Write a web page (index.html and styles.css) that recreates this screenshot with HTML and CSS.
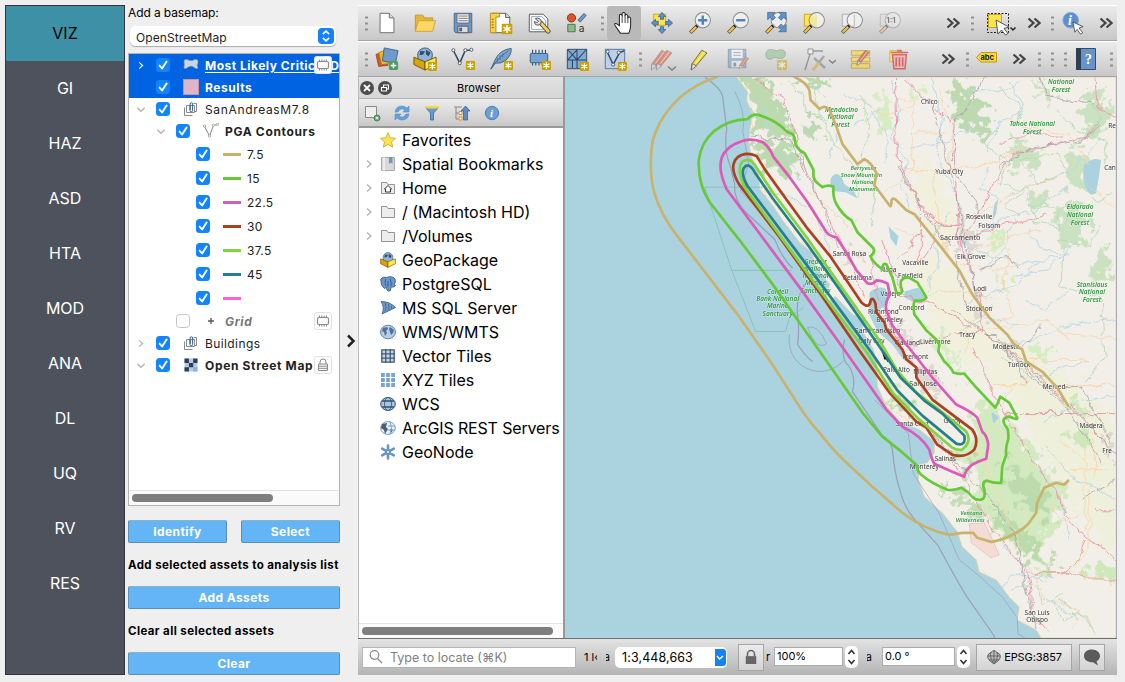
FILE: index.html
```
<!DOCTYPE html>
<html lang="en">
<head>
<meta charset="utf-8">
<title>Map viewer</title>
<link rel="stylesheet" href="styles.css">
</head>
<body>
<svg class="defs" width="0" height="0">
  <defs>
    <linearGradient id="blueg" x1="0" y1="0" x2="1" y2="1"><stop offset="0" stop-color="#a9c6e4"/><stop offset="1" stop-color="#4f80b4"/></linearGradient>
    <symbol id="star" viewBox="0 0 10 10"><rect width="10" height="10" rx="1.5" fill="#c9a100"/><path d="M5 1.500v7M1.800 3.200l6.400 3.600M8.200 3.200L1.800 6.800" stroke="#fff" stroke-width="1.300"/></symbol>
    <symbol id="more" viewBox="0 0 14 12"><path d="M1.500 1.500l5 4.500-5 4.500M7.500 1.500l5 4.500-5 4.500" fill="none" stroke="#444" stroke-width="2.200"/></symbol>
    <symbol id="lens" viewBox="0 0 26 26"><path d="M2.500 23.500l8-8" stroke="#555" stroke-width="4"/><path d="M3 23l6-6" stroke="#f5c33b" stroke-width="2.400"/><path d="M9 17l2-2" stroke="#111" stroke-width="3"/><circle cx="16" cy="10" r="8.300" fill="#f4f4f4" fill-opacity=".75" stroke="#888" stroke-width="1.100"/></symbol>
    <symbol id="check" viewBox="0 0 14 14"><rect width="14" height="14" rx="3.500" fill="#1285fb"/><path d="M3.600 7.600l2.500 2.900 4.500-7" fill="none" stroke="#fff" stroke-width="1.900" stroke-linecap="round" stroke-linejoin="round"/></symbol>
    <symbol id="right" viewBox="0 0 8 10"><path d="M2 1.500L5.800 5 2 8.500" fill="none" stroke="currentColor" stroke-width="1.400"/></symbol>
    <symbol id="down" viewBox="0 0 10 8"><path d="M1.300 2.200L5 5.800l3.700-3.600" fill="none" stroke="currentColor" stroke-width="1.400"/></symbol>
    <symbol id="chip" viewBox="0 0 18 18"><rect x=".5" y=".5" width="17" height="17" rx="2" fill="#fcfcfc" stroke="#e2e2e2"/><rect x="3.500" y="5.500" width="11" height="7" rx="1.500" fill="none" stroke="#8a8a8a" stroke-width="1.200"/><path d="M5.500 3.500v2m2.300-2v2m2.400-2v2m2.300-2v2M5.500 12.500v2m2.300-2v2m2.400-2v2m2.300-2v2" stroke="#8a8a8a"/></symbol>
    <symbol id="group" viewBox="0 0 16 16"><path d="M1.500 6.500v8h8M3.500 4.500h8v7h-8z" fill="none" stroke="#8a8a8a"/><path d="M7 5v4.500a1.300 1.300 0 002.600 0V3a1.200 1.200 0 00-2.400 0v6" fill="none" stroke="#355f83"/><path d="M10.500 2.500h3v8h-2" fill="none" stroke="#8a8a8a"/></symbol>
    <symbol id="folder" viewBox="0 0 16 16"><path d="M1.500 2.500h5l1.500 2h6.500v9h-13z" fill="#ececec" stroke="#959595"/></symbol>
    <symbol id="box" viewBox="0 0 26 26"><circle cx="13" cy="9" r="8" fill="#8fb3da" stroke="#365979"/><path d="M8 4l5 1-2 3-4 1zM14 3l5 3-2 4-3-2z" fill="#31506e"/><path d="M1 11l12 5v9L1 19z" fill="#d8a40a" stroke="#6b5204"/><path d="M25 11l-12 5v9l12-6z" fill="#fce94f" stroke="#6b5204"/></symbol>
    <symbol id="globe" viewBox="0 0 16 16"><ellipse cx="8" cy="8" rx="7.500" ry="6.800" fill="#b4cde8" stroke="#6285aa"/><path d="M3 4l4-1 1 2-2 2 1 2-2 3-1-4-2-1zM10 3l4 3-1 3-2 2-1-3-1-3z" fill="#4d7299"/></symbol>
    <symbol id="pencil" viewBox="0 0 26 26"><path d="M5 22L3.500 24l1-6L15 3.500l5.500 3L9 20z" fill="currentColor" stroke="#5a4a20" stroke-width=".8"/><path d="M8 18L18 5" stroke="#fff" stroke-opacity=".5" stroke-width="1.500"/><path d="M4.500 18l4.800 2.500L3.500 25z" fill="#ddd" stroke="#444" stroke-width=".7"/></symbol>
  </defs>
</svg>

<main class="app">
  <nav class="modes">
    <a class="mode mode-on">VIZ</a><a class="mode">GI</a><a class="mode">HAZ</a><a class="mode">ASD</a><a class="mode">HTA</a><a class="mode">MOD</a><a class="mode">ANA</a><a class="mode">DL</a><a class="mode">UQ</a><a class="mode">RV</a><a class="mode">RES</a>
  </nav>

  <section class="side">
    <label class="basemap-label">Add a basemap:</label>
    <div class="combo"><span>OpenStreetMap</span><svg width="16" height="16" viewBox="0 0 16 16"><rect width="16" height="16" rx="4" fill="#1482fa"/><path d="M4.800 6.200L8 3.200l3.200 3M4.800 9.800L8 12.800l3.200-3" fill="none" stroke="#fff" stroke-width="1.600"/></svg></div>
    <div class="layers">
      <div class="row sel lvl1"><svg class="tw"><use href="#right"/></svg><svg class="ck"><use href="#check"/></svg><svg class="ic" viewBox="0 0 16 16"><path d="M1 4q0-2 3-1.500Q8 5 12 2.500q3-.5 3 1.500 0 3-1 4l1 3q-1 1-3 0-3-3-6-1.500Q3 12.500 1 11q-.5-1 .500-3z" fill="#c9d6e4" stroke="#8b9bb0" stroke-width=".6"/></svg><b class="under">Most Likely Critical D</b><svg class="tag"><use href="#chip"/></svg></div>
      <div class="row sel lvl1"><i class="tw"></i><svg class="ck"><use href="#check"/></svg><i class="ic swatch"></i><b class="tight">Results</b></div>
      <div class="row lvl1"><svg class="tw"><use href="#down"/></svg><svg class="ck"><use href="#check"/></svg><svg class="ic"><use href="#group"/></svg><span class="loose">SanAndreasM7.8</span></div>
      <div class="row lvl2"><svg class="tw"><use href="#down"/></svg><svg class="ck"><use href="#check"/></svg><svg class="ic" viewBox="0 0 16 16"><path d="M1.500 3.500L6.500 13l4-10.500 4-1" fill="none" stroke="#888"/><g fill="#fff" stroke="#999" stroke-width=".8"><circle cx="1.500" cy="3" r="1.200"/><circle cx="10.300" cy="2.300" r="1.200"/><circle cx="14.500" cy="1.500" r="1.200"/><circle cx="6.500" cy="13" r="1.200"/></g></svg><b class="loose">PGA Contours</b></div>
      <div class="row leaf"><svg class="ck"><use href="#check"/></svg><i class="line gold"></i><span>7.5</span></div>
      <div class="row leaf"><svg class="ck"><use href="#check"/></svg><i class="line green"></i><span>15</span></div>
      <div class="row leaf"><svg class="ck"><use href="#check"/></svg><i class="line pink"></i><span>22.5</span></div>
      <div class="row leaf"><svg class="ck"><use href="#check"/></svg><i class="line rust"></i><span>30</span></div>
      <div class="row leaf"><svg class="ck"><use href="#check"/></svg><i class="line lime"></i><span>37.5</span></div>
      <div class="row leaf"><svg class="ck"><use href="#check"/></svg><i class="line teal"></i><span>45</span></div>
      <div class="row leaf"><svg class="ck"><use href="#check"/></svg><i class="line magenta"></i></div>
      <div class="row lvl2 grid-row"><i class="tw"></i><i class="ck empty"></i><svg class="ic" viewBox="0 0 16 16"><path d="M8 5v6M5 8h6" stroke="#555" stroke-width="1.300"/></svg><b class="loose">Grid</b><svg class="tag"><use href="#chip"/></svg></div>
      <div class="row lvl1"><svg class="tw"><use href="#right"/></svg><svg class="ck"><use href="#check"/></svg><svg class="ic"><use href="#group"/></svg><span class="mid-loose">Buildings</span></div>
      <div class="row lvl1"><svg class="tw"><use href="#down"/></svg><svg class="ck"><use href="#check"/></svg><svg class="ic" viewBox="0 0 16 16"><path d="M1.500 1.500h13v13h-13z" fill="#b4cae4"/><path d="M1.500 1.500h4.400v4.400H1.500zM10.200 1.500h4.300v4.400h-4.300zM5.900 5.900h4.300v4.300H5.900zM1.500 10.200h4.400v4.300H1.500z" fill="#2c3e55"/><path d="M10.200 10.200h4.300v4.300h-4.300z" fill="#8fb0d6"/></svg><b class="loose">Open Street Map</b><svg class="tag" viewBox="0 0 18 18"><rect x=".5" y=".5" width="17" height="17" rx="2" fill="#fcfcfc" stroke="#e2e2e2"/><path d="M4.500 8h9v6.500h-9zM6 8V6a3 3 0 016 0v2M5 10.200h8M5 12.300h8" fill="none" stroke="#8a8a8a"/></svg></div>
      <div class="hbar"><i class="thumb"></i></div>
    </div>
    <div class="pair"><button class="btn">Identify</button><button class="btn">Select</button></div>
    <p class="hint">Add selected assets to analysis list</p>
    <button class="btn">Add Assets</button>
    <p class="hint">Clear all selected assets</p>
    <button class="btn">Clear</button>
  </section>

  <div class="handle"><svg width="10" height="14" viewBox="0 0 10 14"><path d="M2 1.500L7.500 7 2 12.500" fill="none" stroke="#222" stroke-width="2.500"/></svg></div>

  <section class="gis">
    <div class="bar">
      <i class="dots first"></i>
      <span class="cell"><svg viewBox="0 0 26 26"><path d="M5.500 2.500h10l5 5v16h-15z" fill="#fff" stroke="#666"/><path d="M15.500 2.500v5h5" fill="#ddd" stroke="#666"/></svg></span>
      <span class="cell"><svg viewBox="0 0 26 26"><path d="M2.500 22V4.500h8l2 3h9V12" fill="#e7b632" stroke="#b99a3a"/><path d="M2.500 22L6 10.500h18.500L21 22z" fill="#fdd762" stroke="#c9a23e"/></svg></span>
      <span class="cell"><svg viewBox="0 0 26 26"><path d="M3.500 2.500h19v21H5l-1.500-2z" fill="#6d97c4" stroke="#41658c"/><path d="M6.500 3h13v10h-13z" fill="#f2f2f2" stroke="#667"/><path d="M8 5.500h10M8 8h10M8 10.500h10" stroke="#777"/><path d="M7.500 16.500h11v7h-11z" fill="#ddd" stroke="#556"/><path d="M9 18h3v4H9z" fill="#41658c"/></svg></span>
      <span class="cell"><svg viewBox="0 0 26 26"><path d="M3.500 2.500h15l4 4v17h-19z" fill="#fff" stroke="#555"/><path d="M18 2.500v4.500h4.500" fill="#ddd" stroke="#555"/><path d="M1.500 2.500h10v4h-4v17h-6z" fill="#f7d24b" stroke="#b38c14"/><path d="M3 9h2M3 12h2M3 15h2M3 18h2" stroke="#775b0b"/><use href="#star" x="13.500" y="13.500" width="12" height="12"/></svg></span>
      <span class="cell"><svg viewBox="0 0 26 26"><path d="M2.500 3.500h15l5 5v14h-20z" fill="#fafafa" stroke="#555"/><path d="M5 6h11l4 4v10H5z" fill="none" stroke="#8ca9cf"/><path d="M15 13l8 9" stroke="#444" stroke-width="5" stroke-linecap="round"/><path d="M16 14l7 8" stroke="#f5cf56" stroke-width="3.200" stroke-linecap="round"/><path d="M9 8.500a4 4 0 016 5l-3 2a4 4 0 01-4-4l3 1 1.500-1.500z" fill="#ddd" stroke="#555"/></svg></span>
      <span class="cell"><svg viewBox="0 0 26 26"><circle cx="7" cy="7.500" r="4.500" fill="#d9542b" stroke="#8d3214"/><path d="M15 11l7-7.500" stroke="#3d5f85" stroke-width="4"/><path d="M15.500 10.500l6-6.500" stroke="#739fcb" stroke-width="2.400"/><path d="M3 14.500h8v8H3z" fill="#8fb68e" stroke="#497748"/><text x="15" y="22.500" class="glyph">a</text></svg></span>
      <i class="dots mid"></i>
      <span class="cell on"><svg viewBox="0 0 26 26"><path d="M9 24l-5.500-8q-1.500-3 1-2.500L8 16V4.500q1.500-2 3 0V2.500q1.700-2 3.200 0v2q1.500-1.500 3 .5v2q1.800-1.200 3 .8V15q0 5-2 9z" fill="#fff" stroke="#222" stroke-width="1.100"/><path d="M11 4.500V13M14.200 4.500V13M17.200 6V13" stroke="#222" stroke-width=".9"/></svg></span>
      <span class="cell"><svg viewBox="0 0 26 26"><path d="M4 3.500h13v12H4z" fill="#fce54e" stroke="#c9a615"/><path d="M13 1.500l4 4.500h-2.300v3h-3.400V6H9zM13 24.500l4-4.500h-2.300v-3h-3.400v3H9zM1.500 13l4.500-4v2.300h3v3.400H6V17zM24.500 13L20 9v2.300h-3v3.400h3V17z" fill="#5e8fc6" stroke="#345d89" stroke-width=".8"/></svg></span>
      <span class="cell"><svg viewBox="0 0 26 26"><use href="#lens"/><path d="M16 5v10M11 10h10" stroke="#4f83bb" stroke-width="2.600"/></svg></span>
      <span class="cell"><svg viewBox="0 0 26 26"><use href="#lens"/><path d="M11 10h10" stroke="#4f83bb" stroke-width="2.600"/></svg></span>
      <span class="cell"><svg viewBox="0 0 26 26"><use href="#lens"/><path d="M4 1.500h8l-2.500 2.500 3 3-3 3-3-3L4 9.500zM24 1.500h-8l2.500 2.500-3 3 3 3 3-3L24 9.500zM24 22.500h-8l2.500-2.500-3-3 3-3 3 3 2.500-2.500z" fill="#6191c5" stroke="#345d89" stroke-width=".7"/></svg></span>
      <span class="cell"><svg viewBox="0 0 26 26"><path d="M2.500 3.500h13v13h-13z" fill="#fce54e" stroke="#c9a615"/><use href="#lens"/><path d="M9 6h7v11q-8-1-7-11z" fill="#f2e486" fill-opacity=".7"/></svg></span>
      <span class="cell"><svg viewBox="0 0 26 26"><path d="M2.500 3.500h13v13h-13z" fill="#ececec" stroke="#aaa"/><use href="#lens"/><path d="M15.500 4v12.500H11" fill="none" stroke="#bbb"/></svg></span>
      <span class="cell dim"><svg viewBox="0 0 26 26"><path d="M2.500 3.500h13v13h-13z" fill="#ddd" stroke="#999"/><use href="#lens"/><text x="9" y="13.500" class="ratio">1:1</text></svg></span>
      <svg class="more m30"><use href="#more"/></svg><i class="dots w14"></i>
      <span class="cell"><svg class="wide" viewBox="0 0 38 26"><path d="M8.500 3.500h21v19h-21z" fill="none" stroke="#222" stroke-dasharray="2 1.500"/><path d="M9.500 4.500h13v13h-13z" fill="#fce54e" stroke="#c9a615"/><path d="M17 10l13 7-5 1.500 4 5-2.500 1.500-4-5-3.500 4z" fill="#fff" stroke="#444" stroke-width=".9"/><path d="M31.500 17.500L34 20l2.500-2.500" fill="none" stroke="#222" stroke-width="1.500"/></svg></span>
      <svg class="more m4"><use href="#more"/></svg><i class="dots w10"></i>
      <span class="cell info"><svg viewBox="0 0 26 26"><circle cx="10.500" cy="10" r="8.500" fill="#5c8fcd" stroke="#8aabd2"/><text x="7.500" y="15.500" class="info-i">i</text><path d="M13 12l11 5-4.500 1.500 4 5-2.500 1.500-3.500-5-2.500 3z" fill="#fff" stroke="#444" stroke-width=".9"/></svg></span>
      <svg class="more last"><use href="#more"/></svg>
    </div>
    <div class="bar">
      <i class="dots first"></i>
      <span class="cell"><svg viewBox="0 0 26 26"><path d="M1 8l9-3 4 15-10 1z" fill="#d25a27" stroke="#8a3512" stroke-width=".7"/><path d="M4 6l9-3 4 15-10 1z" fill="#f1b92d" stroke="#98700d" stroke-width=".7"/><path d="M10 1l15 3-3 14-14-3z" fill="#6f9bcb" stroke="#3d648f"/><rect x="15" y="15" width="10" height="10" rx="2" fill="#4e9b63"/><path d="M20 17v6M17 20h6" stroke="#fff" stroke-width="1.600"/></svg></span>
      <span class="cell"><svg viewBox="0 0 26 26"><use href="#box"/><use href="#star" x="16" y="16" width="10" height="10"/></svg></span>
      <span class="cell"><svg viewBox="0 0 26 26"><path d="M2.500 3.500l7 14 6-14h6" fill="none" stroke="#334c66" stroke-width="1.700"/><g fill="#fff" stroke="#456"><circle cx="2.500" cy="3.500" r="1.700"/><circle cx="15.500" cy="3.500" r="1.700"/><circle cx="22" cy="3" r="1.700"/><circle cx="9.500" cy="17.500" r="1.700"/></g><use href="#star" x="16" y="15" width="10" height="10"/></svg></span>
      <span class="cell"><svg viewBox="0 0 26 26"><path d="M2 24L7 13Q12 3 24 1.500q1 7-6 13-5 4-11 3z" fill="url(#blueg)" stroke="#416486"/><path d="M2 24q6-11 19-20M9 12v4m3-7v5m3-7v4" fill="none" stroke="#456a91"/><use href="#star" x="16" y="15" width="10" height="10"/></svg></span>
      <span class="cell"><svg viewBox="0 0 26 26"><path d="M6 3v17M9.500 3v17M13 3v17M16.500 3v17M20 3v17" stroke="#345472" stroke-width="1.200"/><rect x="3.500" y="7" width="19" height="10" rx="1" fill="#78a2d1" stroke="#335c87"/><use href="#star" x="16" y="15" width="10" height="10"/></svg></span>
      <span class="cell"><svg viewBox="0 0 26 26"><path d="M2.500 2.500h21v21h-21z" fill="#80a9d4" stroke="#284562"/><path d="M3 14h20M13 3v20M3 3l10 11M13 3L3 14M23 3L13 14M8 14v9" stroke="#284562" stroke-width="1.100"/><use href="#star" x="16" y="16" width="10" height="10"/></svg></span>
      <span class="cell"><svg viewBox="0 0 26 26"><path d="M2.500 2.500h21v21h-21z" fill="#bcd0e8" stroke="#4d7499"/><path d="M4 4l7 15L18 6l5-2" fill="none" stroke="#2f4e6d" stroke-width="1.600"/><g fill="#fff" stroke="#456"><circle cx="5" cy="5" r="1.700"/><circle cx="17" cy="6" r="1.700"/><circle cx="11" cy="19" r="1.700"/></g><use href="#star" x="16" y="16" width="10" height="10"/></svg></span>
      <i class="dots mid"></i>
      <span class="cell dim"><svg class="wide" viewBox="0 0 38 26"><g color="#e0472a"><use href="#pencil" x="5" y="1" width="24" height="24"/><use href="#pencil" x="11" y="1" width="24" height="24" transform="translate(-1)"/></g><path d="M25 20.500l4 3.500 4-3.500" fill="none" stroke="#333" stroke-width="1.500"/></svg></span>
      <span class="cell yellow"><svg viewBox="0 0 26 26"><use href="#pencil"/></svg></span>
      <span class="cell dim red"><svg viewBox="0 0 26 26"><path d="M2.500 2.500h19v20h-19z" fill="#6d97c4" stroke="#41658c"/><path d="M6 3h12v9H6z" fill="#fff"/><path d="M8 6h8M8 9h8" stroke="#777"/><path d="M6 15h12v7H6z" fill="#eee"/><path d="M8 17h3v4H8z" fill="#41658c"/><use href="#pencil" x="12" y="8" width="16" height="17"/></svg></span>
      <span class="cell dim"><svg viewBox="0 0 26 26"><path d="M2 8q0-6 7-5 5 2 9 0 6 0 5 6-2 5-8 3-4-2-7 1-6 1-6-5z" fill="#83bd87" stroke="#5c8b60"/><use href="#star" x="14" y="14" width="11" height="11"/></svg></span>
      <span class="cell vertex dim"><svg class="vx" viewBox="0 0 34 26"><path d="M3 24L9 5h12" fill="none" stroke="#555" stroke-width="1.400"/><path d="M6 3h5v5H6z" fill="#fff" stroke="#444"/><path d="M12 12l11 10M22 10L11 24" stroke="#777" stroke-width="2.500"/><path d="M11 24l6-7" stroke="#d6aa2c" stroke-width="3"/><path d="M27 14l3.500 3 3.500-3" fill="none" stroke="#333" stroke-width="1.500"/></svg></span>
      <span class="cell dim2 red"><svg viewBox="0 0 26 26"><path d="M2.500 4h20v5h-20zM2.500 11h20v5h-20zM2.500 18h20v5h-20z" fill="#f7d94a" stroke="#b89322"/><use href="#pencil" x="6" y="0" width="20" height="22"/></svg></span>
      <span class="cell dim2"><svg viewBox="0 0 26 26"><path d="M3 4h13v12H3z" fill="#fce54e" stroke="#c9a615"/><path d="M6 8.500h15l-1.500 15h-12z" fill="#f2b4b4" stroke="#d43a3a" stroke-width="1.600"/><path d="M4 6h19M11 4h5M10 11v10M13.500 11v10M17 11v10" stroke="#d43a3a" stroke-width="1.800"/></svg></span>
      <svg class="more m16"><use href="#more"/></svg><i class="dots w14"></i>
      <svg class="abc" viewBox="0 0 26 16"><path d="M2.500 7.500L7 2.500h15.500v9.500H7z" fill="#fbd63d" stroke="#c39b08"/><text x="6.500" y="10" class="abc-t">abc</text></svg>
      <svg class="more m6"><use href="#more"/></svg><i class="dots w14"></i><i class="dots w12"></i><i class="dots w14"></i>
      <svg class="book" viewBox="0 0 28 26"><path d="M4.500 2.500h19v21h-19z" fill="#6794c8" stroke="#2f4d6c"/><path d="M4 2h5v22H4z" fill="#2d3f52"/><text x="13" y="18" class="q">?</text></svg>
      <i class="dots end"></i>
    </div>

    <div class="work">
      <aside class="browser">
        <header class="dock-title"><svg width="34" height="16" viewBox="0 0 34 16"><circle cx="8" cy="8" r="7" fill="#4c4c4c"/><path d="M5 5l6 6M11 5l-6 6" stroke="#fff" stroke-width="1.800"/><circle cx="26" cy="8" r="7" fill="#4c4c4c"/><path d="M22.500 7.500h5v3.500h-5zM24.500 7V5h5v4h-2" fill="none" stroke="#fff" stroke-width="1.100"/></svg><span>Browser</span></header>
        <div class="dock-tools">
          <svg viewBox="0 0 18 18"><path d="M2.500 2.500h11v11h-11z" fill="#eee" stroke="#888"/><circle cx="14" cy="14" r="3" fill="#7fae84" stroke="#4c8052"/><circle cx="14" cy="14" r="1" fill="#fff"/></svg>
          <svg viewBox="0 0 18 18"><path d="M2 8q1-6 7-6 3 0 5 2l2-2v6h-6l2-2q-5-3-7 2zM16 10q-1 6-7 6-3 0-5-2l-2 2v-6h6l-2 2q5 3 7-2z" fill="#66a0dc" stroke="#4b86c0" stroke-width=".5"/></svg>
          <svg viewBox="0 0 18 18"><path d="M2 3h14l-5.500 6v7h-3V9z" fill="#6b9ace" stroke="#4375a9"/><path d="M2 2h14v2.500H2z" fill="#f0d84c"/></svg>
          <svg viewBox="0 0 18 18"><path d="M1 3h8M3 3v12h3M3 9h3" fill="none" stroke="#888"/><path d="M6 7.500h3v3H6zM6 13h3v3H6z" fill="#fff" stroke="#ec8b25"/><path d="M12.500 2l4.500 5h-2.500v9h-4V7H8z" fill="#5c8cc0" stroke="#365d87" stroke-width=".7"/></svg>
          <svg viewBox="0 0 18 18"><circle cx="9" cy="9" r="6.700" fill="#6c9dd5" stroke="#4f7fb4"/><text x="7" y="13" class="mini-i">i</text></svg>
        </div>
        <div class="tree">
          <div class="item"><i class="ar"></i><svg viewBox="0 0 16 16"><path d="M8 .8l2.200 5 5.300.5-4 3.600 1.200 5.300L8 12.400l-4.700 2.800 1.200-5.300-4-3.600 5.300-.5z" fill="#fbe34f" stroke="#c9a52a" stroke-width=".8"/></svg>Favorites</div>
          <div class="item"><svg class="ar"><use href="#right"/></svg><svg viewBox="0 0 16 16"><path d="M1.500 1.500h13v13h-13z" fill="#d8d8d8" stroke="#aaa"/><path d="M4 1v14" stroke="#fff"/><path d="M9 1h3.500v7l-1.700-1.500L9 8z" fill="#6d95c0"/></svg><span class="wider">Spatial Bookmarks</span></div>
          <div class="item"><svg class="ar"><use href="#right"/></svg><svg viewBox="0 0 16 16"><use href="#folder"/><path d="M4.500 9L8 5.500 11.500 9H10.500V12h-5V9z" fill="#fff" stroke="#333"/></svg>Home</div>
          <div class="item"><svg class="ar"><use href="#right"/></svg><svg viewBox="0 0 16 16"><use href="#folder"/></svg>/ (Macintosh HD)</div>
          <div class="item"><svg class="ar"><use href="#right"/></svg><svg viewBox="0 0 16 16"><use href="#folder"/></svg>/Volumes</div>
          <div class="item"><i class="ar"></i><svg viewBox="0 0 26 26"><use href="#box"/></svg>GeoPackage</div>
          <div class="item"><i class="ar"></i><svg viewBox="0 0 16 16"><path d="M.8 3q3-3 5.500-1.500Q10-.2 13.500 1.500q3.500 2.500.5 7.500l1.500.5-2 1.500H11l-.5 3.500q-2 1.500-3.500-.5L6.500 11 5 12.500Q1 11 .8 3z" fill="#6a97c7" stroke="#3f678f"/><path d="M5.500 3q-1 4 .5 7M10 3q2 4 1 7M8 5v6" fill="none" stroke="#3a5e84"/></svg>PostgreSQL</div>
          <div class="item"><i class="ar"></i><svg viewBox="0 0 16 16"><path d="M1 1.500q9 0 14.500 6L2 14q3-7-1-12.500z" fill="#6e9ac8" stroke="#48719a"/><path d="M5 2.500q2 5 0 9M8.500 4q1 3 0 6M11.500 5.500v3" fill="none" stroke="#486f99"/></svg>MS SQL Server</div>
          <div class="item"><i class="ar"></i><svg viewBox="0 0 16 16"><use href="#globe"/></svg>WMS/WMTS</div>
          <div class="item"><i class="ar"></i><svg viewBox="0 0 16 16"><path d="M1.800 1.800h12.400v12.400H1.800z" fill="#c3d6ec" stroke="#46596f" stroke-width="1.300"/><path d="M5.800 1v14M10.200 1v14M1 5.800h14M1 10.200h14" stroke="#46596f" stroke-width="1.300"/></svg>Vector Tiles</div>
          <div class="item"><i class="ar"></i><svg viewBox="0 0 16 16"><path d="M1 3h14M1 8h14M1 13h14" stroke="#77a3d2" stroke-width="3.800" stroke-dasharray="3.800 1.300"/></svg>XYZ Tiles</div>
          <div class="item"><i class="ar"></i><svg viewBox="0 0 16 16"><ellipse cx="8" cy="8" rx="7.300" ry="6.500" fill="#a9c6e5" stroke="#35506e"/><ellipse cx="8" cy="8" rx="3.500" ry="6.500" fill="none" stroke="#4a6787"/><path d="M2 5h12M2 11h12" stroke="#35506e" stroke-width="1.500"/></svg>WCS</div>
          <div class="item"><i class="ar"></i><svg viewBox="0 0 16 16"><ellipse cx="8" cy="8" rx="7.300" ry="6.500" fill="#e9f1fa" stroke="#7ca1c9"/><path d="M2 4l5-1-1 4 2 2-3 5-1-4-3-2zM10 9l3 1-2 3z" fill="#4a5f77"/><path d="M10 2q3 5 0 12M8 6h7M8 10h7" fill="none" stroke="#6ea0d6"/></svg><span class="narrow">ArcGIS REST Servers</span></div>
          <div class="item"><i class="ar"></i><svg viewBox="0 0 16 16"><path d="M8 1.500v13M2.200 4.700l11.600 6.600M13.800 4.700L2.200 11.300" stroke="#6894c2" stroke-width="2.600" stroke-linecap="round"/><circle cx="8" cy="8" r="3" fill="#6894c2"/><circle cx="8" cy="8" r="1" fill="#fff"/></svg>GeoNode</div>
        </div>
        <div class="hbar"><i class="thumb"></i></div>
      </aside>

      <svg class="map" viewBox="565 78 552 560" preserveAspectRatio="none">
        <defs>
          <filter id="rough" x="-5%" y="-5%" width="110%" height="110%" color-interpolation-filters="sRGB"><feTurbulence type="fractalNoise" baseFrequency=".1" numOctaves="4" seed="4"/><feDisplacementMap in="SourceGraphic" scale="38" xChannelSelector="R" yChannelSelector="G"/></filter>
          <filter id="wiggle" x="-5%" y="-5%" width="110%" height="110%" color-interpolation-filters="sRGB"><feTurbulence type="fractalNoise" baseFrequency=".07" numOctaves="3" seed="9"/><feDisplacementMap in="SourceGraphic" scale="10" xChannelSelector="R" yChannelSelector="G"/></filter>
          <path id="land" d="M737 78L748 93 747 101 753 116 750 131 749 145 752 158 759 175 760 190 773 206 783 221 800 243 812 253 817 268 830 285 826 304 836 297 853 315 867 321 862 330 874 350 877 363 878 387 887 407 900 422 920 430 935 442 935 453 928 463 920 465 919 480 925 497 943 513 958 532 963 547 977 560 980 572 997 580 1010 597 1020 607 1018 620 1037 630 1042 638H1117V78z"/>
          <clipPath id="shore"><use href="#land"/></clipPath>
        </defs>
        <rect x="565" y="78" width="552" height="560" fill="#aad3df"/>
        <use href="#land" fill="#f2efe9" stroke="#e5cfa8" stroke-width=".8"/>
        <g clip-path="url(#shore)">
          <path d="M905 255L950 262 972 300 990 330 1060 370 1117 420V560L1060 480 1020 410 985 370 950 350 925 300zM920 150l35 50 10 50-25-10-25-50z" fill="#eff1d6" opacity=".7" filter="url(#rough)"/>
          <g filter="url(#rough)">
            <path d="M738 72L766 78 772 100 788 118 792 138 782 138 752 130 750 100zM752 146L785 142 798 160 792 178 775 172 760 158zM808 118l14 6-2 14-12-2zM795 78l32 0 3 8-16 5zM957 85l12-2 8 18 18 18-8 20-20-8-14-20z" fill="#bcd9b0"/>
            <path d="M1036 84l16 8 6 16-14-4zM1086 92l20 0 6 28-12 22-14-10-6-18zM1014 140l20 8 8 16-12 8-18-8zM1066 154l18-4 10 12-8 22-14 6-8-16zM1058 208l22-4 8 14-6 26-20 4-4-22zM1098 255l10-8 4 30-12 12-8-14zM1028 190l24 10-4 8-22-4z" fill="#c4dfb8" opacity=".85"/>
            <path d="M908 78l8 6 6 12-8 4zM878 95l10 8 5 26-10 10-8-18zM990 234l12 2 4 10-12 4-6-8zM1003 275l6 6-2 12-6-6zM924 324l22 20 26 34-14-8-26-28zM1025 345l30 0 4 8-22 4z" fill="#d5edc0"/>
            <path d="M884 382l14 12 20 20 8 12-22-12-16-20zM976 400l30 12 28 38 34 48-8 18-14 26-2 32-40-38-26-30 0-25-18-20-24-2 30-6 6-22z" fill="#d3eac0"/>
            <path d="M1008 458l18 12 18 22 12 20-8 8-24-18-14-16zM994 506l18 14 26 22 18 34-24-14-32-36zM892 394l12 8 12 18-16-8zM968 458l12 2-4 12-12-4zM934 484l28 8 26 20-6 10-22-18z" fill="#b4d6a6" opacity=".75"/>
            <path d="M1072 432l18-4 2 16-20 0zM1088 564l30 2v14l-26-2zM1062 402l22 2 8 12-18-2z" fill="#cfe8ba"/>
          </g>
          <g fill="#d8cfca" opacity=".7" filter="url(#rough)"><path d="M952 234h22v18h-20zM912 366l24 6 6 22-16-4zM976 306h12v12h-12zM890 310l12 16 12 20-10 4-14-26zM1002 342h10v10h-10zM1104 440h13v18h-13zM846 250h10v12h-10z"/></g>
          <path d="M970 524l15-1 6 12 9 20-8 3-20-15z" fill="#f3dbd6" stroke="#e7b7ae" stroke-width=".6"/>
          <g fill="#aad3df">
            <path d="M831 180q5-9 11-2l3 7 9 6 4 8-12-6-11-1q-5-5-4-12zM1085 166q8-9 17-5l-2 16-3 17q-8 4-11-7-3-10-1-21zM870 293q8-7 16-4l4 8-6 10-6 6-8-8zM905 292l14-4 7 10-13 4-8-4zM870 306l8 4 8 18 14 16 12 20-8-4-12-16-14-12-8-16zM889 227l10 10-2 10-6-8zM995 205l4-5-2 14-4 8zM992 412l8 6-6 6z"/>
          </g>
          <g fill="none" filter="url(#wiggle)">
            <g stroke="#b3d8e3" stroke-width=".9">
              <path d="M890 80l10 30-6 28 12 24-4 30 18 30M930 78l12 40-4 40 22 46 8 50M952 212l-16 24 4 30-14 26M962 244l40-24 26-6 40-26M970 250l50 14 46-8M985 120l-30 20-20 6M1040 260l-26 28-50 16M1117 320l-54 8-52 20M1090 360l-56 18-32-20M1117 395l-40 8-32 20M1117 500l-46-24-26-32M1000 540l20 24 24 18M760 95l12 40M770 190l44 20 20 50M810 82l20 22M1010 82l16 30-24 10-14 30M1100 140l-30 34-60 20"/>
              <path d="M880 110l-24 16M1015 220l-12 30-22 22M1070 290l-24 20-20-8M1040 470l22 30 8 40M1080 620l-36-24M845 95l25 12 20 34-5 20M960 330l30-12 32 8M1000 200l-20-10 10-20M1030 230l10 20 30 6M840 130l-10 30M780 150l20 30M1080 240l-30 30-34 6M1000 590l14-16 40 4M975 90l26 4 20-10M940 145l-30 5"/>
            </g>
            <g stroke="#fad5aa" stroke-width=".9">
              <path d="M748 84l-3 24 8 20M752 165l12 28 25 25 20 34 28 36M860 100l26 16 30-10M898 100h16l-2 72-26 24M914 134h30M898 170l40 2 60-8 30-18M895 230l30 8M960 220l20-6 44-26 34-8M935 170l4 60 10 30M1010 250l-6 36 10 30-20 10M990 300l-30-10-40 8M1117 340l-60-8M1060 386h57M990 330l60-8 20 18M1090 490v60l-20 22M1086 440v90M1060 440l26 20M880 400l36 26M924 498l32 40 40 50M965 420l50 110 30 70M993 385h34l8-24M810 190l40 40 10-10M770 180l-4 15 54 60M1050 505l15 18 16-8M1030 360l60 0M1050 600l30 10-6 20"/>
              <path d="M940 92l12 40-2 40M820 230l40 28M1085 180l32 30M968 355v-30l24-16M1042 230l-40 10-30 12M1010 120l20 10 40 4 20 30M1004 404l10-18 40-8M960 264l40 6 30-10M1094 420l2 60M1070 470h40"/>
            </g>
            <g stroke="#ea93a5" stroke-width=".9">
              <path d="M896 78l2 82 22 44 18 22 24 0M1096 78l2 30 19 12M905 78l30 30 18 16 3 50M920 205l0 60 18-26M936 226h26l-6 10-8 10M962 244l20-36 22-36 10-16 34-10 40-8 10-16M962 244l20 60 0 30M982 330l-45 8-30 12M972 325l44 30 54 48 47 52M975 350l22 50 30 50 24 34 20 38 46 38M962 242l36-16 50-10M898 260l22-26M870 255l6 40 16 30 10 30 25 20M882 240l20 54 18 8M755 80l30 20 18 60 20 46 26 50 16 40M930 430l24 30 24 44 20 30 30 40 6 40 14 18M1005 414h48l64 0M1035 573h36M1098 510h19M890 330l50 50"/>
              <path d="M900 298l28 4 20 12 24 14M960 245l-4-70M1000 145l14-8 50 0"/>
            </g>
            <path d="M1035 573h36l14 6 32 0M1060 575l20-16 6-20" stroke="#f1a392"/>
            <g stroke="#9d979d" stroke-width=".7">
              <path d="M932 104l20 70 12 60 18 84M985 78l-10 20-20 24-2 40M750 138l40 2 30 60 20 50M955 174l24 30 0 10M898 165l22 40 30 44M980 270l26-12 15 10M984 336h14l30 48M1010 350l24 30 30 22 38 60M1065 388l18 0 28 54M1117 480l-33 18M930 428l50 60 36 46 12 60 10 34M1042 78l4 18 50 10M955 310l42 32 24 8 22-24"/>
              <path d="M955 252l12 56M1000 170l32-22 50-6 18-16M1000 346l60 50 50 50"/>
            </g>
            <g stroke="#b5d9b2" stroke-width=".9">
              <path d="M788 82l14 12 4 20 16 4 10 26 24 24 2 30M815 92l6 30M860 98l10 30-10 40 16 20-4 40M1000 130l-16 12 26 24-10 20 28 4 2 16M1026 190l-20 16 16 10M1064 250l-2 36 40 12 4 60-20 24M1062 118l30 20M1000 90l24 20-8 16M1010 590l26-6 8 20 20-10M1060 600l30 20 6 16M890 300l-16 20"/>
              <path d="M1020 160l40-6 10 20-30 10zM1030 205l30 4 0 20-24-6zM1070 150l20-16 20 10-6 20M1080 185l20 20 12-12M1058 240l30 8 14-20M1020 150l-20 8 2 16M1056 604l8 16 16-8 14 16M1092 100l10 20-14 10"/>
            </g>
          </g>
        </g>
        <g fill="none" stroke="#9388a8" stroke-width="1.200" opacity=".7" stroke-linejoin="round">
          <path d="M705 78Q722 90 723 98T727 130Q724 150 730 165L735 185Q734 200 745 212L775 240Q782 258 793 269M805 285Q796 300 798 315T798 345Q806 357 813 362M845 340q-4 20 4 26 8 12 4 26l30 44q8 4 10 14 2 24 8 42 4 18 20 34l18 20q10 20 28 50l28 40 0 10 8 14"/>
          <path d="M735 92q12 24 8 40l6 32-8 28 30 32M875 400l34 34 5 40 26 40 20 46 20 16 24 22 14 20 1 16 16 10" stroke-width=".7"/>
          <path d="M790 335a31 31 0 0054 26M808 328q10-4 19 16-10 8-19-16z" stroke-width=".8"/>
        </g>
        <path d="M705 188h58M705 188l27 83 24 61h30l4-14 14-10M732 271h60" fill="none" stroke="#82bfad" stroke-width=".8"/>
        <g class="park">
          <text x="842" y="113">Mendocino</text><text x="841" y="120">National</text><text x="841" y="128">Forest</text>
          <g class="small"><text x="864" y="171">Berryessa</text><text x="862" y="178">Snow Mountain</text><text x="864" y="185">National</text><text x="864" y="192">Monument</text></g>
          <text x="1062" y="85">National</text><text x="1062" y="93">Forest</text>
          <text x="1033" y="127">Tahoe National</text><text x="1033" y="135">Forest</text>
          <text x="1081" y="210">Eldorado</text><text x="1081" y="218">National</text><text x="1081" y="226">Forest</text>
          <text x="1093" y="288">Stanislaus</text><text x="1093" y="295">National</text><text x="1093" y="303">Forest</text>
          <text x="778" y="295">Cordell</text><text x="778" y="302">Bank National</text><text x="778" y="309">Marine</text><text x="778" y="317">Sanctuary</text>
          <text x="816" y="265">Greater</text><text x="816" y="272">Farallones</text><text x="816" y="279">National</text><text x="816" y="286">Marine</text><text x="816" y="294">Sanctuary</text>
          <g class="small"><text x="972" y="515">Ventana</text><text x="971" y="522">Wilderness</text></g>
        </g>
        <g class="town">
          <text x="930" y="105">Chico</text><text x="950" y="175">Yuba City</text><text x="980" y="220">Roseville</text><text x="990" y="229">Folsom</text><text x="972" y="260">Elk Grove</text><text x="916" y="266">Vacaville</text><text x="911" y="279">Fairfield</text><text x="889" y="273">Napa</text><text x="850" y="257">Santa Rosa</text><text x="858" y="281">Petaluma</text><text x="891" y="297">Vallejo</text><text x="912" y="311">Concord</text><text x="884" y="315">Richmond</text><text x="890" y="323">Berkeley</text><text x="981" y="292">Lodi</text><text x="980" y="312">Stockton</text><text x="968" y="338">Tracy</text><text x="1007" y="350">Modesto</text><text x="936" y="345">Livermore</text><text x="908" y="346">Oakland</text><text x="1020" y="367">Turlock</text><text x="1055" y="389">Merced</text><text x="1092" y="428">Madera</text><text x="1108" y="453">Fre</text><text x="1113" y="129">Re</text><text x="1111" y="171">Can</text><text x="916" y="360">Fremont</text><text x="897" y="372">Palo Alto</text><text x="926" y="374">Milpitas</text><text x="953" y="423">Gilroy</text><text x="913" y="426">Santa Cruz</text><text x="946" y="461">Salinas</text><text x="925" y="469">Monterey</text><text x="1038" y="615">San Luis</text><text x="1038" y="622">Obispo</text><text x="872" y="344">Daly City</text>
          <g class="city"><text x="961" y="241">Sacramento</text><text x="878" y="334">San Francisco</text><text x="924" y="386">San Jose</text></g>
        </g>
        <path d="M883 352l6 10M886 360l-2-6" stroke="#111" stroke-width="2"/>
        <g fill="none" stroke-width="2.700" stroke-linejoin="round" stroke-linecap="round">
          <path stroke="#c9b36c" d="M717 78C702 83 690 90 682 97 667 110 658 124 653 141 650 156 650 180 655 195 660 212 669 226 677 236L707 275 740 318 768 358C795 398 805 418 820 433Q832 449 847 463L873 487 903 513C915 522 930 531 950 535L963 533 974 533 978 538 992 542C1005 540 1022 532 1030 523L1037 513 1038 503 1045 488 1057 483 1065 485 1069 481M795 78Q808 84 810 92L811 101 820 110Q825 105 830 111L837 128 843 145 858 165 865 160Q872 163 877 174L875 186 890 206Q892 209 892 202 893 197 898 202L907 211 915 215 938 243 960 271 973 295 990 318 1008 335 1015 345 1023 350 1027 362 1043 372 1058 388 1069 406"/>
          <path stroke="#66ca38" d="M748 120C754 113 760 116 765 118Q778 123 788 133L793 135Q796 139 796 146 801 153 805 154 810 163 814 171 813 180 817 183L823 188Q828 185 834 187.500 833 198 837 205 843 216 852 221L858 233 874 249Q876 253 871 257 874 264 883 270 883 263 887 265L893 278 897 293Q901 296 903 292 900 284 902 281 906 276 911 279L918 283 927 298Q925 302 916 301 913 303 915 315L927 331Q938 340 940 345L939 352 945 362Q952 368 954 373 959 375 965 374L977 388 996 408Q999 404 1001 397L1010 403 1018 418Q1019 421 1010 417 1001 418 1006 426 1010 429 1009 440 1006 448 1007 455L1003 467 1002 483Q995 484 988 481 984 481 984 486 987 495 984 499 978 502 973 497 968 491 962 488 955 491 948 490 931 483 922 475 918 472 917 465L902 452 883 437 863 413 821 353 773 285 740 241 710 203Q698 185 699 161C702 138 720 121 748 120z"/>
          <path stroke="#dc5ab8" d="M740 143Q750 138 763 143 770 148 774 158L790 178 808 203 827 233Q830 237 837 238L848 255 857 271 868 284Q873 286 877 281 882 281 888 284 890 292 890 296 885 304 887 311L893 326 907 345 933 378 957 405Q972 412 978 418L983 432Q988 436 989 445L987 459Q978 462 973 465 966 470 965 477L953 472 935 464Q932 459 930 450 922 436 903 427L887 410 846 352 800 288 750 221 727 190Q714 162 728 150 733 145 740 143z"/>
          <path stroke="#aa4222" d="M738 158Q746 152 757 157L765 170 783 195 807 228 830 256 847 281 862 303Q870 310 871 302 873 296 876 304L877 313 885 323 887 330 903 350 907 360 917 368 917 378 933 400 957 418 973 430Q980 440 975 450 966 459 953 455L938 445 927 428 917 422 890 393 862 354 822 296 780 238 740 186Q728 167 738 158z"/>
          <path stroke="#83d340" d="M742 163Q750 157 756 167L773 193 807 238 840 285 880 341 897 370 917 393 937 408 967 432Q973 442 963 450 958 451 953 448L920 420 893 393 868 354 816 285 747 191Q736 172 742 163z"/>
          <path stroke="#26808a" d="M744 169Q749 162 755 173L773 199 807 244 840 290 880 347 901 378 925 401 943 414 965 436Q967 447 957 444L923 416 898 391 872 353 821 284 748 187Q741 175 744 169z"/>
        </g>
      </svg>
    </div>

    <footer class="status">
      <div class="locate"><svg width="16" height="16" viewBox="0 0 16 16"><circle cx="6.500" cy="6" r="4.300" fill="none" stroke="#888" stroke-width="1.200"/><path d="M9.500 9.500L14 14" stroke="#888" stroke-width="1.300"/></svg>Type to locate (⌘K)</div>
      <span class="cut one">1 l‹</span><span class="cut two">a</span>
      <div class="scale"><span>1:3,448,663</span><svg width="11" height="17" viewBox="0 0 11 17"><path d="M0 0h8q3 0 3 3v11q0 3-3 3H0z" fill="#1482fa"/><path d="M2 7l2.500 3L8 7" fill="none" stroke="#fff" stroke-width="1.500"/></svg></div>
      <div class="sbtn lock"><svg width="14" height="16" viewBox="0 0 16 18"><path d="M2 8h12v9H2z" fill="#666"/><path d="M4 8V5.500a4 4 0 018 0V8" fill="none" stroke="#666" stroke-width="1.800"/></svg></div>
      <span class="lab r">r</span><div class="spin">100%</div><div class="step"><svg viewBox="0 0 13 22"><path d="M3.500 8l3-3.500 3 3.500M3.500 14l3 3.500 3-3.500" fill="none" stroke="#333" stroke-width="1.600"/></svg></div>
      <span class="lab ro">a</span><div class="spin deg">0.0 °</div><div class="step"><svg viewBox="0 0 13 22"><path d="M3.500 8l3-3.500 3 3.500M3.500 14l3 3.500 3-3.500" fill="none" stroke="#333" stroke-width="1.600"/></svg></div>
      <div class="sbtn crs"><svg width="16" height="16" viewBox="0 0 16 16"><path d="M3.500 11.500Q-1 6 5 3.500q3-3.500 6 0 6 2.500 1.500 8L8 15z" fill="#bbb"/><g fill="none" stroke="#666"><path d="M3.500 11.500Q-1 6 5 3.500q3-3.500 6 0 6 2.500 1.500 8L8 15z"/><path d="M8 1v14M5 3q-2 5 3 12 5-7 3-12M2 7h12M3 11h10"/></g></svg>EPSG:3857</div>
      <div class="sbtn msg"><svg width="18" height="18" viewBox="0 0 18 18"><path d="M9 1.500c5 0 8 3 8 6.500 0 2.600-1.700 4.500-3.500 5.500l1.500 4-5-3.200C5 14.500 1 12 1 8s3-6.500 8-6.500z" fill="#5b5b5b"/></svg></div>
    </footer>
  </section>
</main>
</body>
</html>
```
FILE: styles.css
```
* { box-sizing: border-box; }
body { margin: 0; background: #efefef; font-family: Inter, "Liberation Sans", sans-serif; font-size: 12px; color: #000; overflow: hidden; }
svg { display: block; flex: none; }
i { font-style: normal; flex: none; }
.defs { height: 0; }
.app { display: flex; width: 1125px; height: 682px; padding: 5px 8px 7px 5px; }

.modes { width: 120px; height: 670px; flex: none; background: #4e525c; border: 1px solid #31343b; display: flex; flex-direction: column; }
.mode { height: 55px; display: flex; align-items: center; justify-content: center; color: #fff; font-size: 16px; padding-bottom: 2px; }
.mode-on { background: #3e90a7; color: #000; }

.side { width: 212px; margin-left: 3px; flex: none; display: flex; flex-direction: column; height: 670px; }
.basemap-label { height: 18px; line-height: 16px; font-size: 12px; white-space: nowrap; letter-spacing: -.1px; }
.combo { margin: 3px 4px 0 2px; height: 20px; flex: none; background: #fff; border-radius: 5px; box-shadow: 0 1px 1px #aaa; display: flex; align-items: center; justify-content: space-between; padding: 0 2px 0 6px; font-size: 12px; letter-spacing: .1px; color: #222; }
.combo span { padding-top: 2px; }
.layers { margin-top: 7px; height: 453px; flex: none; background: #fff; border: 1px solid #b3b3b3; overflow: hidden; display: flex; flex-direction: column; }
.row { height: 22px; flex: none; display: flex; align-items: center; position: relative; white-space: nowrap; color: #222; font-size: 12px; }
.row b { font-weight: 700; }
.row .loose { letter-spacing: .66px; }
.row .mid-loose { letter-spacing: .4px; }
.row .tight { letter-spacing: .55px; }
.sel { background: #0063e1; color: #fff; }
.lvl1 { padding-left: 7px; }
.lvl2 { padding-left: 27px; }
.leaf { height: 24px; padding-left: 67px; letter-spacing: .3px; }
.tw { width: 10px; height: 9px; margin-right: 10px; color: #b5b5b5; }
.sel .tw { color: #fff; }
.ck { width: 14px; height: 14px; }
.empty { border: 1px solid #c4c4c4; border-radius: 3.5px; }
.ic { width: 16px; height: 16px; margin: 0 6px 0 13px; }
.swatch { background: #dfb4c9; border: 1px solid #c795ae; }
.under { text-decoration: underline; text-underline-offset: 2px; letter-spacing: .5px; }
.tag { width: 18px; height: 18px; position: absolute; left: 185px; top: 2px; }
.line { width: 18px; height: 3px; margin: 0 6px 0 13px; }
.gold { background: #c9b36c; } .green { background: #66ca38; } .pink { background: #dc5ab8; }
.rust { background: #aa4222; } .lime { background: #83d340; } .teal { background: #26808a; } .magenta { background: #fb62e3; }
.grid-row b { font-style: italic; color: #777; }
.hbar { height: 15px; flex: none; margin-top: auto; border-top: 1px solid #e3e3e3; background: #fafafa; padding: 3px 3px; }
.thumb { display: block; width: 141px; height: 8px; border-radius: 4px; background: #7e7e7e; }
.pair { display: flex; gap: 14px; margin-top: 14px; }
.btn { display: block; width: 100%; height: 23px; flex: none; margin: 0; padding: 0; border: 1px solid #5a8fb5; border-top-color: #84b4cc; border-radius: 2px; background: #64b5f6; color: #fff; font: 700 12px Inter, sans-serif; letter-spacing: .4px; }
.pair .btn { flex: 1; }
.hint { margin: 0; height: 43px; line-height: 45px; font-weight: 700; font-size: 11.5px; white-space: nowrap; letter-spacing: .4px; }

.handle { width: 18px; flex: none; display: flex; align-items: center; justify-content: flex-end; padding: 2px 2px 0 0; }

.gis { width: 759px; flex: none; height: 670px; display: flex; flex-direction: column; }
.bar { height: 36px; flex: none; display: flex; align-items: center; background: linear-gradient(#ececec, #c7c7c7); border-top: 1px solid #fff; border-bottom: 1px solid #a5a5a5; }
.cell { width: 38px; height: 34px; flex: none; display: flex; align-items: center; justify-content: center; }
.cell svg { width: 24px; height: 24px; }
.cell .wide { width: 38px; height: 26px; }
.cell .vx { width: 34px; height: 26px; }
.cell.on { background: #b9b9b9; width: 34px; margin: 0 2px; border-radius: 3px; }
.cell.info { width: 32px; margin-right: 6px; }
.cell.vertex { width: 47px; }
.dim { opacity: .5; } .dim2 { opacity: .7; }
.yellow { color: #ead935; } .red { color: #da5331; }
.dots { width: 10px; height: 21px; background: radial-gradient(circle, #8e8e8e 1.1px, transparent 1.5px) center / 3px 6px repeat-y; }
.dots.first { width: 4px; margin: 0 0 0 6px; }
.dots.mid { width: 9px; background-position: 90% 50%; }
.dots.w14 { width: 14px; } .dots.w12 { width: 12px; } .dots.end { width: 10px; margin-left: 6px; }
.more { width: 14px; height: 12px; margin: 0 6px; }
.m30 { margin-left: 37px; margin-right: 5px; } .m16 { margin-left: 23px; margin-right: 5px; } .m4 { margin-left: 10px; } .m6 { margin-left: 12px; }
.last { margin: 0 0 0 4px; }
.abc { width: 26px; height: 16px; margin-top: -3px; }
.book { width: 28px; height: 26px; }
.glyph { font: 11px Inter; fill: #333; } .ratio { font: 700 8.5px Inter; fill: #222; }
.info-i { font: italic 700 15px "Liberation Serif"; fill: #fff; } .mini-i { font: italic 700 11px "Liberation Serif"; fill: #fff; }
.abc-t { font: 700 7.5px Inter; fill: #222; } .q { font: 700 14px "Liberation Serif"; fill: #fff; }

.work { height: 562px; flex: none; display: flex; border-bottom: 1px solid #6f6f6f; }
.browser { width: 207px; flex: none; display: flex; flex-direction: column; border-right: 2px solid #999; border-left: 1px solid #bbb; background: #fff; }
.dock-title { height: 22px; flex: none; background: linear-gradient(#e2e2e2, #d6d6d6); display: flex; align-items: center; font-size: 11px; border-bottom: 1px solid #b5b5b5; }
.dock-title span { margin-left: 64px; letter-spacing: .1px; }
.dock-tools { height: 29px; flex: none; background: linear-gradient(#ececec, #c9c9c9); border-bottom: 2px solid #999; display: flex; align-items: center; gap: 12px; padding-left: 4px; }
.dock-tools svg { width: 18px; height: 18px; }
.tree { flex: 1; }
.item { height: 24px; display: flex; align-items: center; font-size: 16px; white-space: nowrap; padding-left: 6px; }
.item svg { width: 16px; height: 16px; margin-right: 6px; }
.item .ar { width: 8px; height: 10px; margin-right: 7px; color: #b5b5b5; }
.wider { letter-spacing: .05px; } .narrow { letter-spacing: -.15px; }
.browser .thumb { width: 191px; }
.map { width: 552px; height: 561px; border-right: 1px solid #aaa; }
.park { font: italic 600 6.5px "Noto Sans"; fill: #2f9a3f; text-anchor: middle; stroke: #fff; stroke-width: .8px; stroke-opacity: .5; paint-order: stroke; }
.small { font-size: 5.8px; }
.town { font: 6.5px "Noto Sans"; fill: #333; text-anchor: middle; stroke: #fff; stroke-width: .8px; stroke-opacity: .6; paint-order: stroke; }
.city { font-size: 7.2px; }

.status { height: 36px; flex: none; background: linear-gradient(#e3e3e3, #b4b4b4); display: flex; align-items: center; }
.locate { width: 214px; height: 21px; margin-left: 4px; background: #fff; border: 1px solid #b5b5b5; display: flex; align-items: center; gap: 6px; padding-left: 5px; color: #808080; font-size: 12.5px; white-space: nowrap; }
.cut { overflow: hidden; white-space: nowrap; font-size: 11px; }
.one { width: 13px; margin-left: 8px; } .two { width: 4px; margin-left: 9px; direction: rtl; }
.scale { width: 112px; height: 21px; margin-left: 5px; background: #fff; border-radius: 5px; display: flex; align-items: center; justify-content: space-between; padding: 0 1px 0 7px; font-size: 12.5px; letter-spacing: .1px; }
.sbtn { height: 27px; flex: none; border: 1px solid #a5a5a5; background: linear-gradient(#ececec, #d3d3d3); display: flex; align-items: center; justify-content: center; }
.lock { width: 26px; margin-left: 11px; }
.lab { font-size: 11px; } .r { width: 8px; margin-left: 2px; }
.spin { width: 69px; height: 19px; background: #fff; border: 1px solid #aaa; font-size: 11px; line-height: 17px; padding-left: 2px; flex: none; margin-bottom: 1px; }
.step { width: 13px; height: 22px; margin-left: 2px; background: #fff; border-radius: 5px; flex: none; }
.step svg { width: 13px; height: 22px; }
.ro { width: 5px; margin: 0 10px 0 9px; overflow: hidden; direction: rtl; }
.deg { width: 73px; }
.crs { width: 96px; margin-left: 6px; gap: 2px; font-size: 11px; letter-spacing: -.1px; }
.msg { width: 26px; margin-left: 7px; }
```
